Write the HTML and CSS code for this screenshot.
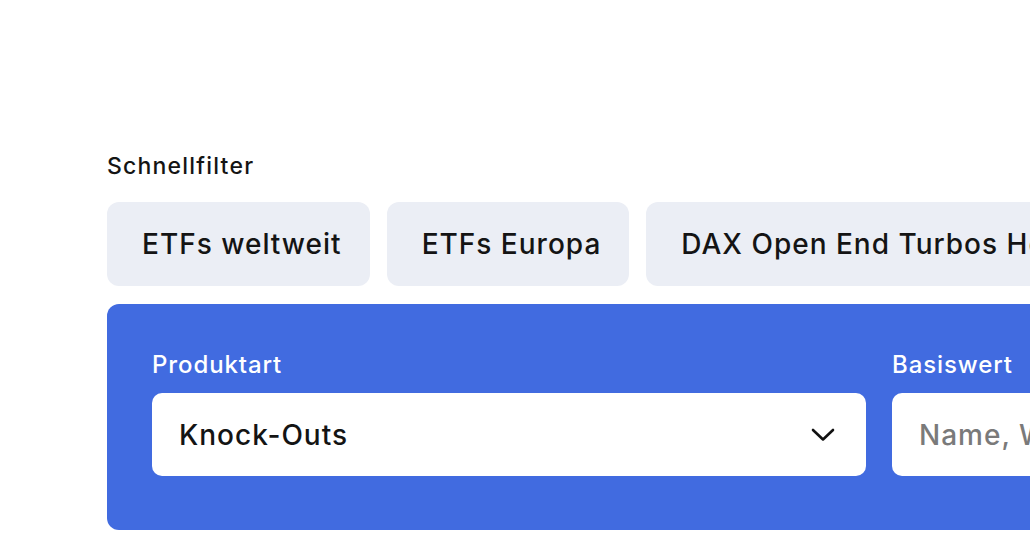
FILE: index.html
```html
<!DOCTYPE html>
<html lang="de">
<head>
<meta charset="utf-8">
<link rel="stylesheet" href="styles.css">
</head>
<body>
<main class="page">
  <h2 class="section-label">Schnellfilter</h2>
  <div class="chips">
    <button class="chip">ETFs weltweit</button>
    <button class="chip">ETFs Europa</button>
    <button class="chip">DAX Open End Turbos Hebel 10</button>
  </div>
  <section class="panel">
    <div class="field field-type">
      <label class="field-label">Produktart</label>
      <div class="select">
        <span class="select-value">Knock-Outs</span>
        <svg class="chevron" width="24" height="14" viewBox="0 0 24 14"><path d="M2 2 L12 11.5 L22 2" fill="none" stroke="#111" stroke-width="2.6" stroke-linecap="round" stroke-linejoin="round"/></svg>
      </div>
    </div>
    <div class="field field-base">
      <label class="field-label">Basiswert</label>
      <div class="input"><span class="placeholder">Name, WKN oder ISIN</span></div>
    </div>
  </section>
</main>
</body>
</html>
```
FILE: styles.css
```css
html, body {
  margin: 0;
  padding: 0;
  background: #fff;
  overflow: hidden;
}
body {
  font-family: Inter, "Noto Sans", sans-serif;
  color: #141414;
  width: 1030px;
  height: 540px;
}
.page {
  padding: 150px 0 0 107px;
  width: 1400px;
}
.section-label {
  margin: 0 0 19px 0;
  font-size: 23px;
  font-weight: 500;
  line-height: 33px;
  letter-spacing: 1.2px;
}
.chips {
  display: flex;
  gap: 17px;
  white-space: nowrap;
}
.chip {
  font-family: inherit;
  font-size: 28px;
  font-weight: 500;
  letter-spacing: 1px;
  color: #141414;
  background: #ebeef5;
  border: 0;
  border-radius: 12px;
  height: 84px;
  padding: 0 28px 0 35px;
  white-space: nowrap;
  flex-shrink: 0;
}
.panel {
  margin-top: 18px;
  background: #416be0;
  border-radius: 12px;
  height: 226px;
  box-sizing: border-box;
  padding: 44px 45px 0 45px;
  display: flex;
  gap: 26px;
  width: 1250px;
}
.field {
  display: flex;
  flex-direction: column;
  flex-shrink: 0;
}
.field-type { width: 714px; }
.field-base { width: 420px; }
.field-label {
  color: #fff;
  font-size: 24px;
  font-weight: 500;
  letter-spacing: 0.9px;
  line-height: 34px;
  margin-bottom: 11px;
}
.select, .input {
  background: #fff;
  border-radius: 10px;
  height: 83px;
  display: flex;
  align-items: center;
  padding: 0 31px 0 27px;
}
.select {
  justify-content: space-between;
}
.select-value {
  font-size: 28px;
  font-weight: 500;
  letter-spacing: 1px;
  color: #141414;
}
.placeholder {
  font-size: 28px;
  font-weight: 500;
  letter-spacing: 1px;
  color: #7a7a7a;
  white-space: nowrap;
}
```
